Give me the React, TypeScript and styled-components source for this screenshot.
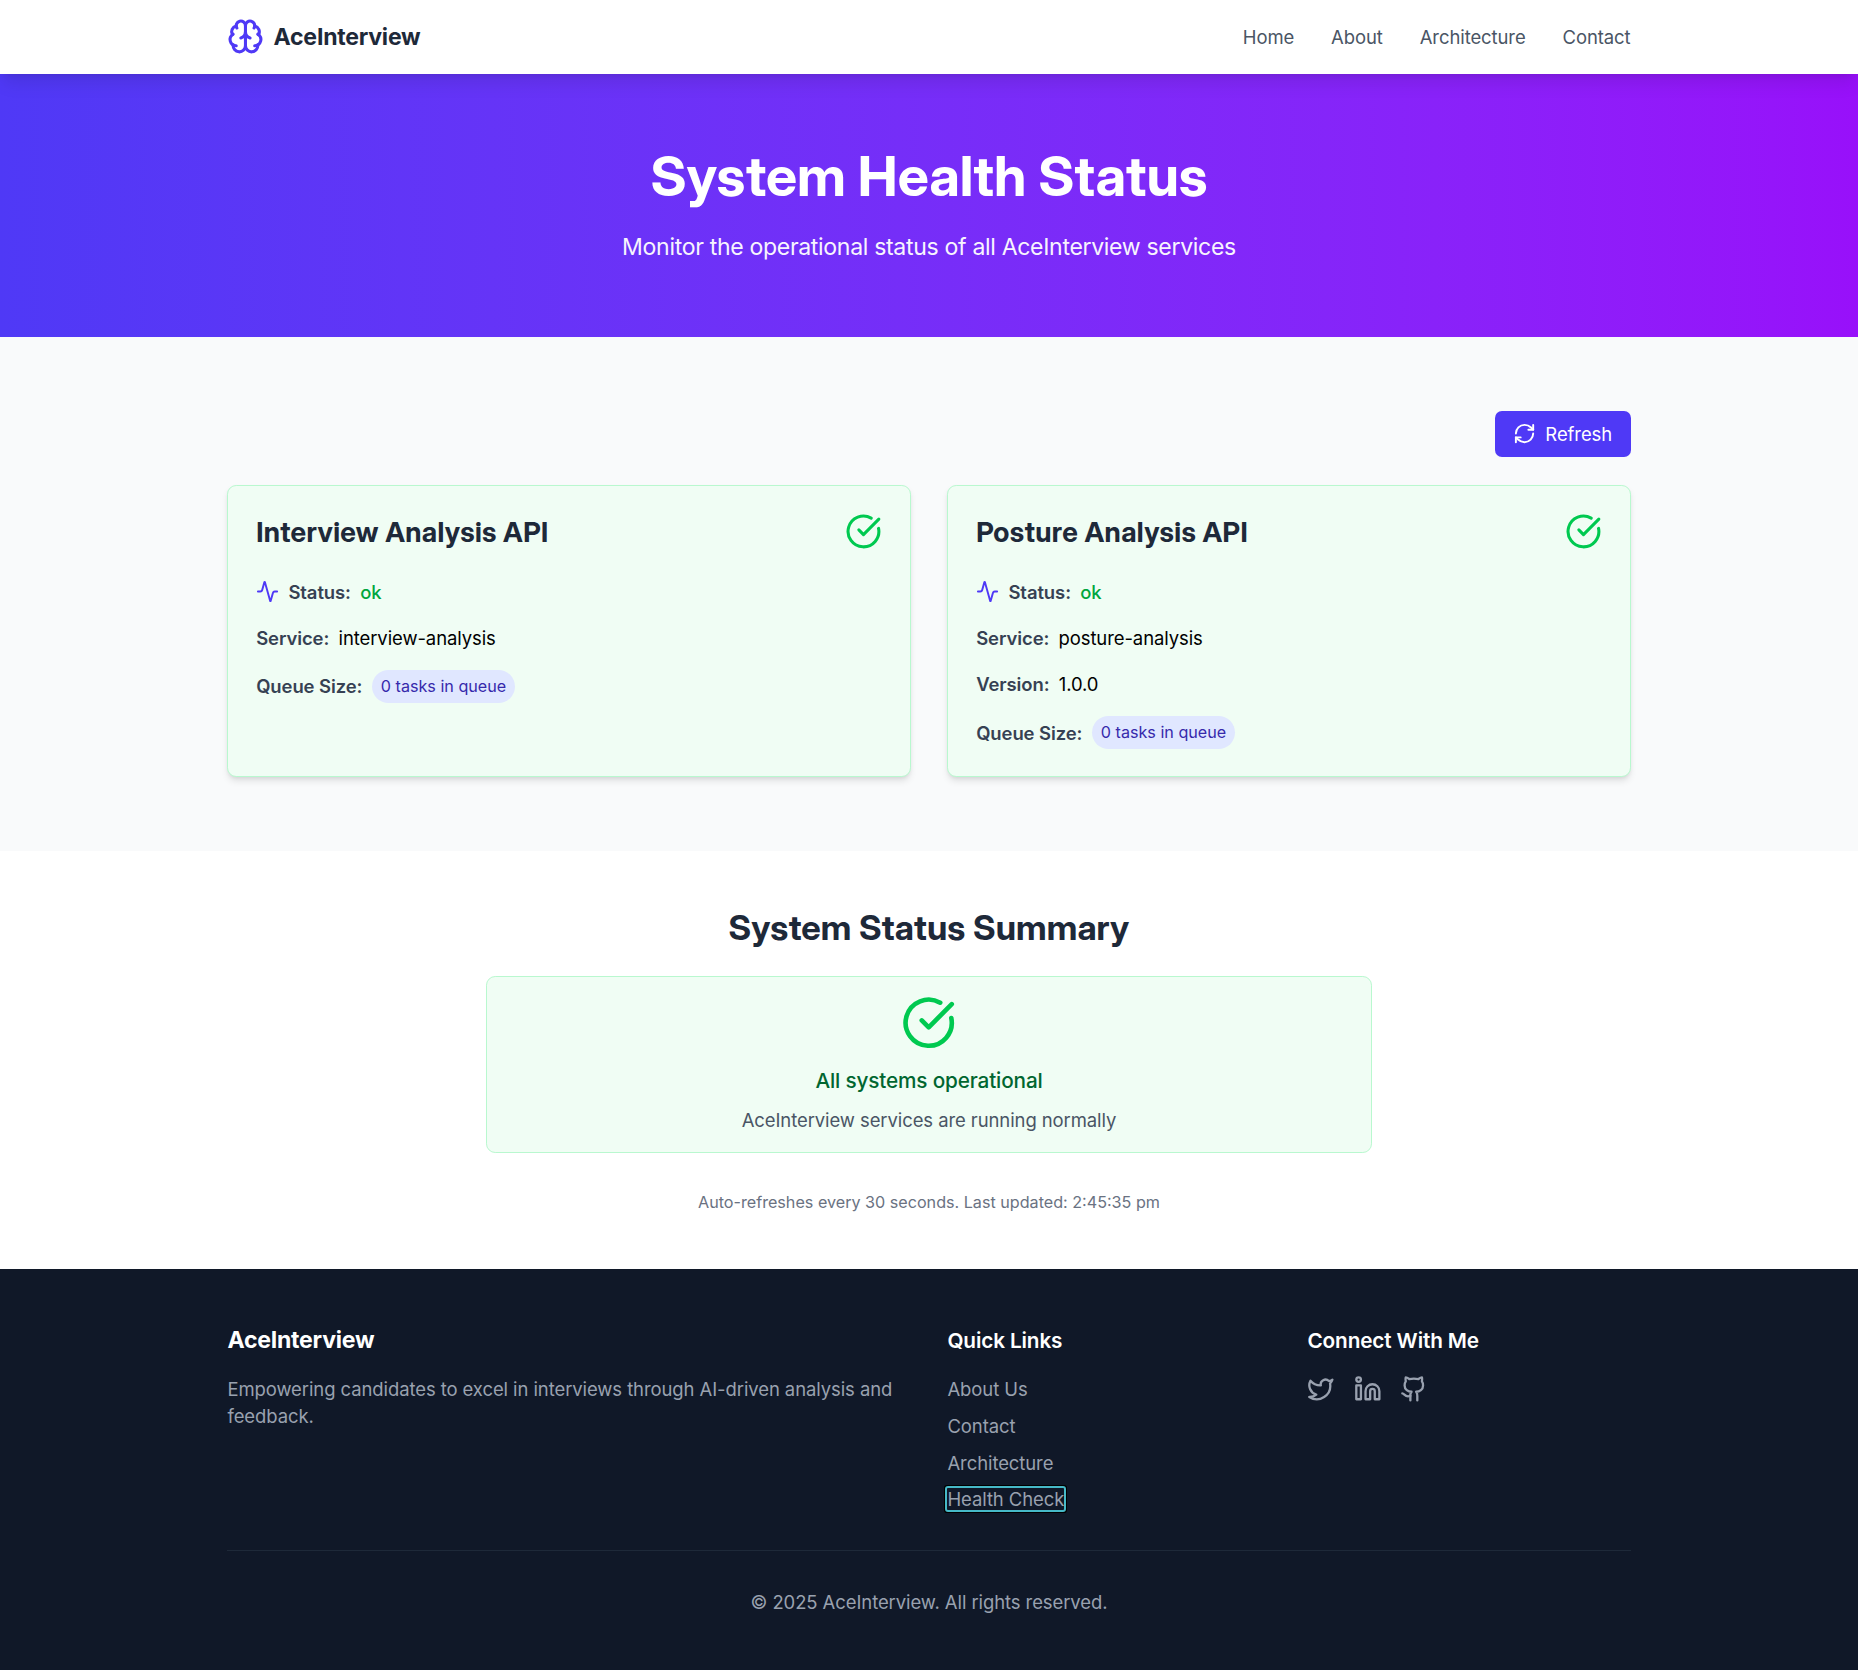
import React from "react";
import styled, { createGlobalStyle, css } from "styled-components";
import { Activity, Brain, CircleCheckBig, Github, Linkedin, RefreshCw, Twitter } from "lucide-react";

const GlobalStyle = createGlobalStyle`
  *, *::before, *::after { box-sizing: border-box; }
  html { font-size: 18.462px; }
  body {
    margin: 0;
    background: #101828;
    color: #000;
    font-family: Inter, "Liberation Sans", sans-serif;
    line-height: 1.5;
    letter-spacing: -0.004em;
  }
  h1, h2, h3, p, ul { margin: 0; padding: 0; }
  ul { list-style: none; }
  a { color: inherit; text-decoration: none; }
  svg { display: block; flex-shrink: 0; }
`;

const lowered = css`
  padding-top: 1px;
  margin-bottom: -1px;
`;

const Container = styled.div`
  max-width: 80rem;
  margin: 0 auto;
  padding: 0 2rem;
`;

const Header = styled.header`
  position: relative;
  z-index: 1;
  background: #fff;
  box-shadow: 0 0.625rem 0.9375rem -0.1875rem rgba(0, 0, 0, 0.1), 0 0.25rem 0.375rem -0.25rem rgba(0, 0, 0, 0.1);
`;

const HeaderBar = styled(Container)`
  display: flex;
  align-items: center;
  justify-content: space-between;
  height: 4rem;
`;

const Brand = styled.a`
  display: flex;
  align-items: center;
  gap: 0.5rem;
  font-size: 1.25rem;
  font-weight: 700;
  letter-spacing: -0.01em;
  color: #1e2939;
  svg { width: 2rem; height: 2rem; color: #4f39f6; }
`;

const Nav = styled.nav`
  ${lowered}
  display: flex;
  gap: 2rem;
  color: #4a5565;
`;

const Hero = styled.section`
  padding: 4rem 0;
  background: linear-gradient(to right in oklab, #4f39f6, #9810fa);
  text-align: center;
  color: #fff;
`;

const HeroTitle = styled.h1`
  font-family: "Inter Display", Inter, sans-serif;
  font-size: 3rem;
  line-height: 1;
  font-weight: 700;
  letter-spacing: 0;
  margin-bottom: 1.5rem;
`;

const HeroText = styled.p`
  font-size: 1.25rem;
  line-height: 1.75rem;
  letter-spacing: -0.0142em;
  opacity: 0.95;
`;

const Services = styled.section`
  padding: 4rem 0;
  background: #f9fafb;
`;

const Toolbar = styled.div`
  display: flex;
  justify-content: flex-end;
  margin-bottom: 1.5rem;
`;

const Button = styled.button`
  display: flex;
  align-items: center;
  gap: 0.5rem;
  padding: 0.5rem 1rem;
  border: 0;
  border-radius: 0.375rem;
  background: #4f39f6;
  color: #fff;
  font: inherit;
  letter-spacing: inherit;
  svg { width: 1.25rem; height: 1.25rem; }
`;

const ButtonLabel = styled.span`
  ${lowered}
`;

const CardGrid = styled.div`
  display: grid;
  grid-template-columns: 1fr 1fr;
  gap: 2rem;
`;

const Card = styled.article`
  padding: 1.5rem;
  border: 1px solid #b9f8cf;
  border-radius: 0.5rem;
  background: #f0fdf4;
  box-shadow: 0 0.25rem 0.375rem -0.0625rem rgba(0, 0, 0, 0.1), 0 0.125rem 0.25rem -0.125rem rgba(0, 0, 0, 0.1);
`;

const CardHead = styled.div`
  display: flex;
  align-items: center;
  justify-content: space-between;
  margin-bottom: 1.5rem;
  svg { width: 2rem; height: 2rem; color: #00c950; }
`;

const CardTitle = styled.h2`
  ${lowered}
  font-family: "Inter Display", Inter, sans-serif;
  font-size: 1.5rem;
  line-height: 2rem;
  font-weight: 700;
  letter-spacing: 0.0125em;
  color: #1e2939;
`;

const Rows = styled.div`
  display: flex;
  flex-direction: column;
  gap: 1rem;
`;

const Row = styled.div`
  display: flex;
  align-items: center;
  gap: 0.5rem;
  svg { width: 1.25rem; height: 1.25rem; color: #4f39f6; }
`;

const Value = styled.span<{ $raised?: boolean }>`
  ${(p) => !p.$raised && lowered}
`;

const Label = styled(Value)`
  font-weight: 600;
  color: #364153;
`;

const StatusValue = styled(Value)`
  font-weight: 500;
  color: #00a63e;
`;

const Badge = styled.span`
  padding: 0.25rem 0.5rem;
  border-radius: 999px;
  background: #e0e7ff;
  color: #372aac;
  font-size: 0.875rem;
  line-height: 1.25rem;
  letter-spacing: 0;
`;

const Summary = styled.section`
  padding: 3rem 0;
  background: #fff;
  text-align: center;
`;

const SummaryTitle = styled.h2`
  font-family: "Inter Display", Inter, sans-serif;
  font-size: 1.875rem;
  line-height: 2.25rem;
  font-weight: 700;
  letter-spacing: 0.003em;
  color: #1e2939;
  margin-bottom: 1.5rem;
`;

const SummaryCard = styled.div`
  display: flex;
  flex-direction: column;
  align-items: center;
  max-width: 48rem;
  margin: 0 auto;
  padding: 1rem;
  border: 1px solid #b9f8cf;
  border-radius: 0.5rem;
  background: #f0fdf4;
  svg { width: 3rem; height: 3rem; color: #00c950; margin-bottom: 0.75rem; }
`;

const SummaryState = styled.p`
  ${lowered}
  font-size: 1.125rem;
  line-height: 1.75rem;
  font-weight: 500;
  letter-spacing: -0.0075em;
  color: #016630;
`;

const SummaryText = styled.p`
  ${lowered}
  margin-top: 0.5rem;
  color: #4a5565;
`;

const Updated = styled.p`
  ${lowered}
  margin-top: 2rem;
  font-size: 0.875rem;
  line-height: 1.25rem;
  letter-spacing: 0;
  color: #6a7282;
`;

const Footer = styled.footer`
  padding: 3rem 0;
  background: #101828;
  color: #99a1af;
`;

const FooterGrid = styled.div`
  display: grid;
  grid-template-columns: repeat(4, 1fr);
  gap: 2rem;
`;

const FooterColumn = styled.div<{ $span?: number }>`
  grid-column: span ${(p) => p.$span ?? 1};
`;

const FooterBrand = styled.h3`
  font-size: 1.25rem;
  line-height: 1.75rem;
  font-weight: 700;
  letter-spacing: -0.01em;
  color: #fff;
  margin-bottom: 1rem;
`;

const FooterText = styled.p`
  ${lowered}
`;

const FooterHeading = styled.h3`
  padding-top: 1px;
  margin-bottom: calc(1rem - 1px);
  font-size: 1.125rem;
  line-height: 1.75rem;
  font-weight: 600;
  letter-spacing: -0.0065em;
  color: #fff;
`;

const LinkList = styled.ul`
  display: flex;
  flex-direction: column;
  gap: 0.5rem;
`;

const LinkItem = styled.li`
  ${lowered}
`;

const FooterLink = styled.a<{ $focused?: boolean }>`
  ${(p) =>
    p.$focused &&
    css`
      border-radius: 1px;
      outline: 2px solid #46b9c8;
      box-shadow: 0 0 0 3px #000;
    `}
`;

const Socials = styled.div`
  display: flex;
  gap: 1rem;
  svg { width: 1.5rem; height: 1.5rem; }
`;

const Copyright = styled.p`
  margin-top: 2rem;
  margin-bottom: -1px;
  padding-top: calc(2rem + 1px);
  border-top: 1px solid #1e2939;
  text-align: center;
`;

interface Service {
  title: string;
  service: string;
  version?: string;
  queue: number;
}

const services: Service[] = [
  { title: "Interview Analysis API", service: "interview-analysis", queue: 0 },
  { title: "Posture Analysis API", service: "posture-analysis", version: "1.0.0", queue: 0 },
];

const quickLinks = ["About Us", "Contact", "Architecture", "Health Check"];

function ServiceCard({ title, service, version, queue }: Service) {
  return (
    <Card>
      <CardHead>
        <CardTitle>{title}</CardTitle>
        <CircleCheckBig />
      </CardHead>
      <Rows>
        <Row>
          <Activity />
          <Label>Status:</Label>
          <StatusValue>ok</StatusValue>
        </Row>
        <Row>
          <Label>Service:</Label>
          <Value>{service}</Value>
        </Row>
        {version && (
          <Row>
            <Label>Version:</Label>
            <Value>{version}</Value>
          </Row>
        )}
        <Row>
          <Label $raised={!version}>Queue Size:</Label>
          <Badge>{queue} tasks in queue</Badge>
        </Row>
      </Rows>
    </Card>
  );
}

export default function App() {
  return (
    <>
      <GlobalStyle />
      <Header>
        <HeaderBar>
          <Brand href="#">
            <Brain />
            AceInterview
          </Brand>
          <Nav>
            {["Home", "About", "Architecture", "Contact"].map((item) => (
              <a key={item} href="#">{item}</a>
            ))}
          </Nav>
        </HeaderBar>
      </Header>
      <main>
        <Hero>
          <HeroTitle>System Health Status</HeroTitle>
          <HeroText>Monitor the operational status of all AceInterview services</HeroText>
        </Hero>
        <Services>
          <Container>
            <Toolbar>
              <Button>
                <RefreshCw />
                <ButtonLabel>Refresh</ButtonLabel>
              </Button>
            </Toolbar>
            <CardGrid>
              {services.map((s) => (
                <ServiceCard key={s.title} {...s} />
              ))}
            </CardGrid>
          </Container>
        </Services>
        <Summary>
          <SummaryTitle>System Status Summary</SummaryTitle>
          <SummaryCard>
            <CircleCheckBig />
            <SummaryState>All systems operational</SummaryState>
            <SummaryText>AceInterview services are running normally</SummaryText>
          </SummaryCard>
          <Updated>Auto-refreshes every 30 seconds. Last updated: 2:45:35 pm</Updated>
        </Summary>
      </main>
      <Footer>
        <Container>
          <FooterGrid>
            <FooterColumn $span={2}>
              <FooterBrand>AceInterview</FooterBrand>
              <FooterText>
                Empowering candidates to excel in interviews through AI-driven analysis and feedback.
              </FooterText>
            </FooterColumn>
            <FooterColumn>
              <FooterHeading>Quick Links</FooterHeading>
              <LinkList>
                {quickLinks.map((link) => (
                  <LinkItem key={link}>
                    <FooterLink href="#" $focused={link === "Health Check"}>{link}</FooterLink>
                  </LinkItem>
                ))}
              </LinkList>
            </FooterColumn>
            <FooterColumn>
              <FooterHeading>Connect With Me</FooterHeading>
              <Socials>
                <Twitter />
                <Linkedin />
                <Github />
              </Socials>
            </FooterColumn>
          </FooterGrid>
          <Copyright>© 2025 AceInterview. All rights reserved.</Copyright>
        </Container>
      </Footer>
    </>
  );
}
